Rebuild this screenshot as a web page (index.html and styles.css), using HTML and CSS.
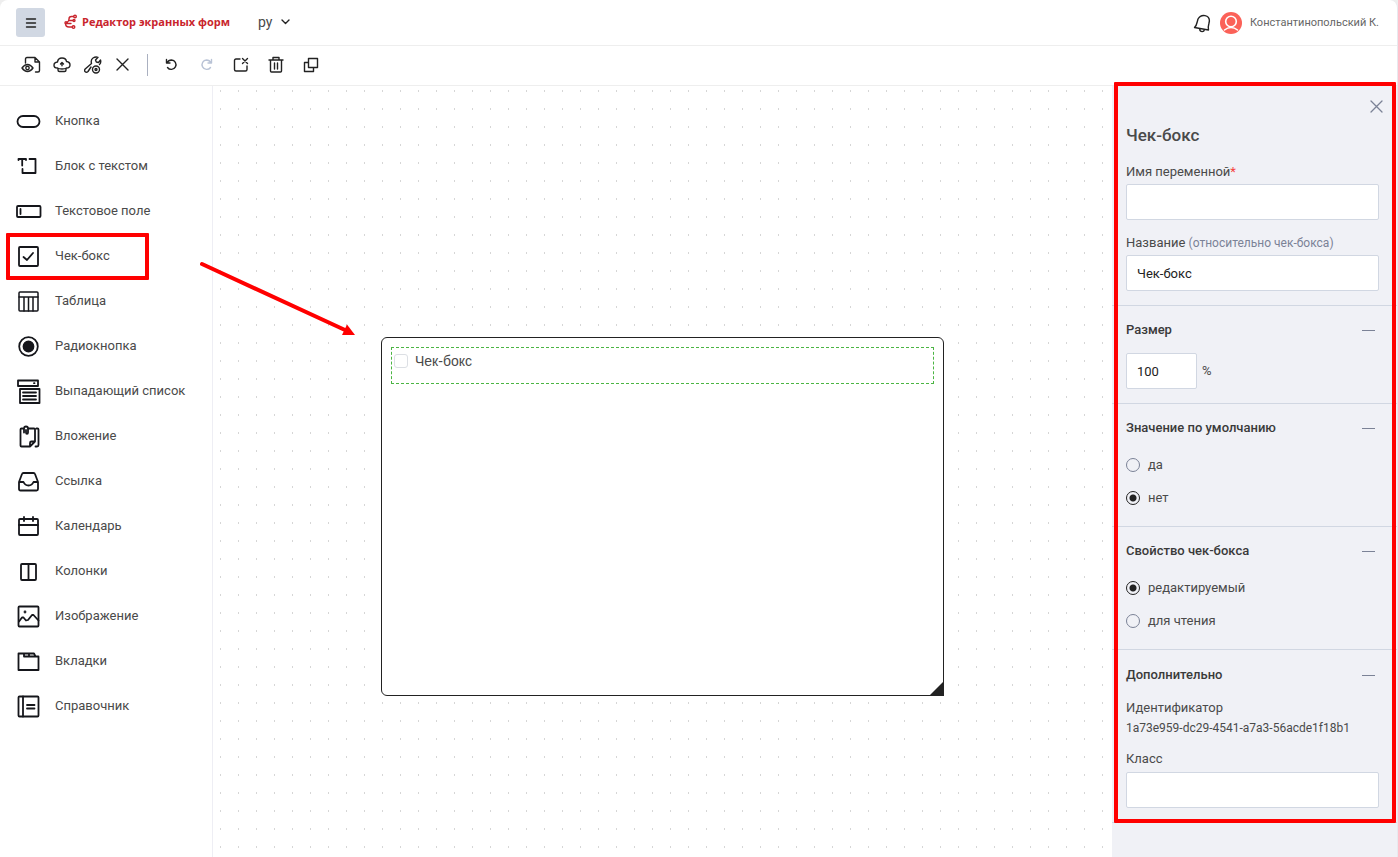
FILE: index.html
```
<!DOCTYPE html>
<html lang="ru">
<head>
    <meta charset="UTF-8">
    <title>Редактор экранных форм</title>
    <link rel="stylesheet" href="styles.css">
</head>
<body>
    <div class="app">
        <header class="header">
            <button class="menu-btn" type="button" aria-label="Меню">
                <svg width="12" height="12" viewBox="0 0 12 12"><path d="M1.500 2h9M1.500 6h9M1.500 10h9"/></svg>
            </button>
            <a class="brand" href="#">
                <svg width="14" height="16" viewBox="0 0 14 16"><path d="M9.500 2.500H7.500Q5 2.500 5 5T3 8.500M1.500 9.500Q1.500 13 5 13h3M5 6.500h3.500M3 9.500h4"/><circle cx="11" cy="2.500" r="1.300"/><circle cx="10" cy="6.500" r="1"/><circle cx="9.500" cy="13" r="1.300"/><circle cx="2" cy="8.800" r="1"/></svg>
                <span>Редактор экранных форм</span>
            </a>
            <button class="lang" type="button">
                <span>ру</span>
                <svg width="9" height="6" viewBox="0 0 9 6"><path d="M1 1l3.500 3.500L8 1"/></svg>
            </button>
            <div class="user">
                <button class="icon-btn" type="button" aria-label="Уведомления">
                    <svg width="20" height="20" viewBox="0 0 20 20"><path d="M2.500 14.500L16.500 17Q15.800 14.500 16.800 11l.6-3Q17.500 3.500 13 2.600T6 6L5.200 9Q4.500 12.500 2.500 14.500zM7.500 15.800q.5 2.700 2.700 2.800 1.800 0 2.300-2"/></svg>
                </button>
                <svg class="avatar" width="22" height="22" viewBox="0 0 22 22"><circle class="avatar-bg" cx="11" cy="11" r="11"/><circle cx="11" cy="9.500" r="5.300"/><path d="M4.500 18q3-2.500 6.500-2.500t6.500 2.500"/></svg>
                <span class="user-name">Константинопольский К.</span>
            </div>
        </header>

        <div class="toolbar">
            <button class="icon-btn" type="button" aria-label="Просмотр">
                <svg width="20" height="18" viewBox="0 0 20 18"><path d="M4.500 7V3q0-1.500 1.500-1.500h8L18.500 6v8.500q0 1.500-1.500 1.500h-2.500M14 1.500V6h4.500M1 12q2.500-3.500 5.500-3.500T12 12q-2.500 3.500-5.500 3.500T1 12z"/><circle cx="6.500" cy="12" r="1.700"/></svg>
            </button>
            <button class="icon-btn" type="button" aria-label="Опубликовать">
                <svg width="18" height="16" viewBox="0 0 18 16"><path d="M4.500 11Q1 11 1 8.200T4.500 5Q5 1 9 1t4.500 3.500Q17 5 17 8t-3.500 3M4.500 11q1.500 1 4.500 1t4.500-1M5 11.500V13q0 1.500 1.500 1.500h5q1.500 0 1.500-1.500v-1.500M9 8.800V5.500M7.500 7L9 5.500 10.500 7"/></svg>
            </button>
            <button class="icon-btn" type="button" aria-label="Настройки">
                <svg width="18" height="18" viewBox="0 0 18 18"><path d="M7 11L4 15.500q-1.500 1.500-2.800.3t0-2.800L7.500 7.500Q6.500 3.500 9 2t5-.7L11.500 4l.8 2 2.200.5L16.500 4q.8 3-1 4.500"/><circle cx="12" cy="13.500" r="3.500"/><circle cx="12" cy="13.500" r="1"/></svg>
            </button>
            <button class="icon-btn" type="button" aria-label="Закрыть">
                <svg width="13" height="13" viewBox="0 0 13 13"><path d="M1 1l11 11M12 1L1 12"/></svg>
            </button>
            <span class="divider"></span>
            <button class="icon-btn" type="button" aria-label="Отменить">
                <svg width="13" height="13" viewBox="0 0 13 13"><path d="M1.500 1.500V5H5M1.800 5Q3.500 2 6.500 2A4.700 4.700 0 1 1 2.500 9.500"/></svg>
            </button>
            <button class="icon-btn disabled" type="button" aria-label="Повторить" disabled>
                <svg width="13" height="13" viewBox="0 0 13 13"><path d="M11.500 1.500V5H8M11.200 5Q9.500 2 6.500 2A4.700 4.700 0 1 0 10.500 9.500"/></svg>
            </button>
            <button class="icon-btn" type="button" aria-label="Очистить">
                <svg width="16" height="16" viewBox="0 0 16 16"><path d="M7 2H3Q1.500 2 1.500 3.500v9Q1.500 14 3 14h9.500q1.500 0 1.500-1.500V9M9.500 1.500l5 5M14.500 1.500l-5 5"/></svg>
            </button>
            <button class="icon-btn" type="button" aria-label="Удалить">
                <svg width="16" height="18" viewBox="0 0 16 18"><path d="M1 4h14M5 4V1.500h6V4M2.500 4v11q0 1 1 1h9q1 0 1-1V4M6.500 7v6M9.500 7v6"/></svg>
            </button>
            <button class="icon-btn" type="button" aria-label="Копировать">
                <svg width="16" height="16" viewBox="0 0 16 16"><path d="M5.500 1.500h9v9h-9zM5.500 5.500h-4v9h9v-4"/></svg>
            </button>
        </div>

        <div class="workspace">
            <nav class="palette">
                <button class="tool" type="button">
                    <svg width="26" height="26" viewBox="0 0 26 26"><rect x="1.500" y="8" width="22" height="11" rx="5.500"/></svg>
                    <span>Кнопка</span>
                </button>
                <button class="tool" type="button">
                    <svg width="26" height="26" viewBox="0 0 26 26"><path d="M2.500 7V6H10v1M6.200 6v6.500M13.500 6h6v14h-13v-4"/></svg>
                    <span>Блок с текстом</span>
                </button>
                <button class="tool" type="button">
                    <svg width="26" height="26" viewBox="0 0 26 26"><rect x="1" y="8" width="23.500" height="11" rx="1"/><path d="M4.500 11v5"/></svg>
                    <span>Текстовое поле</span>
                </button>
                <button class="tool selected" type="button">
                    <svg width="26" height="26" viewBox="0 0 26 26"><rect x="3" y="4" width="19" height="19" rx="1"/><path d="M7.500 14l3.500 3 6-7"/></svg>
                    <span>Чек-бокс</span>
                </button>
                <button class="tool" type="button">
                    <svg class="thin" width="26" height="26" viewBox="0 0 26 26"><rect x="3" y="4" width="19" height="19" rx="1"/><path d="M3 9h19M8 9v14M12.500 9v14M17 9v14"/></svg>
                    <span>Таблица</span>
                </button>
                <button class="tool" type="button">
                    <svg width="26" height="26" viewBox="0 0 26 26"><circle cx="12.500" cy="13.500" r="9.300"/><circle class="solid" cx="12.500" cy="13.500" r="5"/></svg>
                    <span>Радиокнопка</span>
                </button>
                <button class="tool" type="button">
                    <svg width="26" height="26" viewBox="0 0 26 26"><path d="M2 2.500h20v5.500H2zM4 11h19.500v14H4zM7 14.500h13M7 18h13M7 21.500h13M18 5.200h.5"/></svg>
                    <span>Выпадающий список</span>
                </button>
                <button class="tool" type="button">
                    <svg width="26" height="26" viewBox="0 0 26 26"><path d="M6.500 5.500H5.500Q4.500 5.500 4.500 6.500v16q0 1 1 1H14l5-5V6.500q0-1-1-1H13M14 23.500V20q0-1.500 1.500-1.500H19M20.500 5.500h1q1 0 1 1v15.500q0 1.500-1.500 1.500h-1.500M8 9.500V5.500q0-2 2-2t2 2v4q0 1.300-1 1.300T10 9.500V7"/></svg>
                    <span>Вложение</span>
                </button>
                <button class="tool" type="button">
                    <svg width="26" height="26" viewBox="0 0 26 26"><path d="M3 14L6 6q.3-1 1.500-1h10q1.200 0 1.500 1l3 8v7q0 1.500-1.500 1.500h-16Q3 22.500 3 21zM3 14h4.500q1.500 3.500 5 3.500t5-3.500H22"/></svg>
                    <span>Ссылка</span>
                </button>
                <button class="tool" type="button">
                    <svg width="26" height="26" viewBox="0 0 26 26"><rect x="3" y="6" width="19" height="16" rx="1"/><path d="M3 12h19M8 4v4M17 4v4"/></svg>
                    <span>Календарь</span>
                </button>
                <button class="tool" type="button">
                    <svg width="26" height="26" viewBox="0 0 26 26"><rect x="5" y="6" width="15" height="16" rx="1"/><path d="M12.500 6v16"/></svg>
                    <span>Колонки</span>
                </button>
                <button class="tool" type="button">
                    <svg width="26" height="26" viewBox="0 0 26 26"><rect x="2.500" y="3.500" width="20" height="20" rx="1"/><path d="M3 18.500l3-4h1.500l2.500 3 2-.5 4-5h1.500l5 5.500"/><circle class="solid" cx="9" cy="9" r=".5"/></svg>
                    <span>Изображение</span>
                </button>
                <button class="tool" type="button">
                    <svg width="26" height="26" viewBox="0 0 26 26"><path d="M2.500 5.500H18l1.500 3h3V22h-20zM8 5.500v3h12M13 5.500v3"/></svg>
                    <span>Вкладки</span>
                </button>
                <button class="tool" type="button">
                    <svg width="26" height="26" viewBox="0 0 26 26"><rect x="2.500" y="3.500" width="20" height="20" rx="1"/><path d="M7 3.500v20M11 12h7.500M11 15.500h7.500"/></svg>
                    <span>Справочник</span>
                </button>
            </nav>

            <main class="canvas">
                <div class="form-box">
                    <label class="form-field">
                        <input type="checkbox">
                        <span>Чек-бокс</span>
                    </label>
                    <span class="resize"></span>
                </div>
                <svg class="arrow" width="158" height="80" viewBox="0 0 158 80"><path class="arrow-line" d="M4 4L147 70"/><path class="arrow-head" d="M157 75h-13l5-10.500z"/></svg>
            </main>

            <aside class="panel">
                <section class="section section-main">
                    <button class="close" type="button" aria-label="Закрыть панель">
                        <svg width="13" height="13" viewBox="0 0 13 13"><path d="M1 1l11 11M12 1L1 12"/></svg>
                    </button>
                    <h2>Чек-бокс</h2>
                    <label for="var-name">Имя переменной<span class="required">*</span></label>
                    <input id="var-name" class="text-input" type="text">
                    <label for="title">Название <small>(относительно чек-бокса)</small></label>
                    <input id="title" class="text-input" type="text" value="Чек-бокс">
                </section>
                <section class="section">
                    <h3>Размер <button class="fold" type="button" aria-label="Свернуть"></button></h3>
                    <div class="size-row">
                        <input id="size" class="text-input" type="text" value="100">
                        <label for="size">%</label>
                    </div>
                </section>
                <section class="section section-radio">
                    <h3>Значение по умолчанию <button class="fold" type="button" aria-label="Свернуть"></button></h3>
                    <label class="radio"><input type="radio" name="default">да</label>
                    <label class="radio"><input type="radio" name="default" checked>нет</label>
                </section>
                <section class="section section-radio">
                    <h3>Свойство чек-бокса <button class="fold" type="button" aria-label="Свернуть"></button></h3>
                    <label class="radio"><input type="radio" name="access" checked>редактируемый</label>
                    <label class="radio"><input type="radio" name="access">для чтения</label>
                </section>
                <section class="section section-extra">
                    <h3>Дополнительно <button class="fold" type="button" aria-label="Свернуть"></button></h3>
                    <p>Идентификатор</p>
                    <p class="ident">1a73e959-dc29-4541-a7a3-56acde1f18b1</p>
                    <label for="class-name">Класс</label>
                    <input id="class-name" class="text-input" type="text">
                </section>
                <div class="panel-frame"></div>
            </aside>
        </div>
    </div>
</body>
</html>
```
FILE: styles.css
```
* {
    box-sizing: border-box;
    margin: 0;
    padding: 0;
}
body {
    background-color: #eee;
    color: #4a4a4a;
    font: 13px/20px Roboto, "Liberation Sans", sans-serif;
}
button {
    border: 0;
    background: none;
    color: inherit;
    font: inherit;
    cursor: pointer;
}
svg {
    display: block;
    flex: none;
    fill: none;
    stroke: #222;
    stroke-width: 1.4;
    stroke-linecap: round;
    stroke-linejoin: round;
}
.app {
    display: flex;
    flex-direction: column;
    min-height: 100vh;
    border-right: 1px solid #e8e9ee;
    border-radius: 8px 8px 0 0;
    background-color: #fff;
}
.header {
    display: flex;
    align-items: center;
    height: 46px;
    padding: 0 18px 0 16px;
    border-bottom: 1px solid #eee;
}
.menu-btn {
    display: flex;
    align-items: center;
    justify-content: center;
    width: 29px;
    height: 29px;
    border-radius: 3px;
    background-color: #d1d8e3;
}
.brand {
    display: flex;
    align-items: center;
    gap: 4px;
    margin-left: 19px;
    padding-bottom: 2px;
    color: #c9252d;
    font: 700 11px/20px "Open Sans", "Liberation Sans", sans-serif;
    text-decoration: none;
}
.brand svg {
    stroke: #c9252d;
}
.lang {
    display: flex;
    align-items: center;
    gap: 8px;
    margin-left: 28px;
    padding-bottom: 2px;
    font-size: 14px;
}
.user {
    display: flex;
    align-items: center;
    gap: 8px;
    margin-left: auto;
    color: #666;
    font-size: 11px;
}
.icon-btn {
    display: flex;
    align-items: center;
    justify-content: center;
    width: 20px;
    height: 24px;
}
.avatar {
    stroke: #fff;
    stroke-width: 1.6;
}
.avatar-bg {
    fill: #fb6158;
    stroke: none;
}
.toolbar {
    display: flex;
    align-items: center;
    gap: 15px;
    height: 40px;
    padding: 0 21px 2px;
    border-bottom: 1px solid #eee;
}
.toolbar .icon-btn:nth-child(-n+3) {
    margin-right: -4px;
}
.toolbar .icon-btn:nth-child(4) {
    margin-left: -2px;
}
.disabled svg {
    stroke: #b9c3d6;
}
.divider {
    width: 1px;
    height: 22px;
    margin-right: -2px;
    background-color: #aab0c0;
}
.workspace {
    display: flex;
    flex: 1;
}
.palette {
    flex: none;
    width: 213px;
    padding: 12px 0;
    border-right: 1px solid #eeeef4;
}
.tool {
    display: flex;
    align-items: center;
    gap: 13px;
    width: 100%;
    height: 45px;
    padding-left: 16px;
    text-align: left;
}
.tool svg {
    stroke: #15161b;
    stroke-width: 1.8;
}
.tool .thin {
    stroke-width: 1.5;
}
.tool .solid {
    fill: #15161b;
}
.tool.selected {
    position: relative;
}
.tool.selected::after {
    content: "";
    position: absolute;
    top: 0;
    left: 6px;
    box-sizing: border-box;
    width: 143px;
    height: 47px;
    border: 4px solid #f00;
    border-radius: 1px;
}
/* one 1x2 dot in every 18px cell */
.canvas {
    position: relative;
    flex: 1;
    background: conic-gradient(at 1px 2px, transparent 75%, #d6d6d6 0) 7px 4px / 18px 18px;
}
.form-box {
    position: absolute;
    top: 251px;
    left: 168px;
    width: 563px;
    height: 359px;
    padding: 9px;
    border: 1px solid #222;
    border-radius: 6px 6px 0 6px;
    background-color: #fff;
}
.form-field {
    display: flex;
    align-items: flex-start;
    gap: 7px;
    height: 37px;
    padding: 3px 2px;
    border: 1px dashed #4bb543;
    font: 14px/20px "Liberation Sans", Arial, sans-serif;
}
.form-field input {
    width: 14px;
    height: 14px;
    margin-top: 3px;
    border: 1px solid #dcdfe4;
    border-radius: 3px;
    appearance: none;
}
.resize {
    position: absolute;
    right: -1px;
    bottom: -1px;
    width: 15px;
    height: 15px;
    background-color: #222;
    clip-path: polygon(100% 0, 100% 100%, 0 100%);
}
.arrow {
    position: absolute;
    top: 174px;
    left: -15px;
}
.arrow-line {
    stroke: #f00;
    stroke-width: 4;
}
.arrow-head {
    fill: #f00;
    stroke: none;
}
.panel {
    position: relative;
    flex: none;
    width: 285px;
    background-color: #f0f1f6;
}
.panel-frame {
    position: absolute;
    top: -4px;
    left: 2px;
    width: 282px;
    height: 741px;
    border: 4px solid #f00;
    border-radius: 1px;
    pointer-events: none;
}
.section {
    display: flex;
    flex-direction: column;
    padding: 14px 18px 14px 14px;
    border-bottom: 1px solid #d1d7e2;
}
.close {
    align-self: flex-end;
    margin-right: -4px;
}
.close svg {
    stroke: #7b8296;
    stroke-width: 1.3;
}
.panel h2 {
    margin: 12px 0 17px;
    font-size: 17px;
    font-weight: 500;
    line-height: 20px;
}
.section-main label {
    margin-bottom: 2px;
}
.required {
    color: #f5403c;
}
.section small {
    color: #7b8296;
    font-size: 12px;
    line-height: 16px;
}
.text-input {
    width: 100%;
    height: 36px;
    padding: 0 10px;
    border: 1px solid #d1d7e2;
    border-radius: 2px;
    background-color: #fff;
    color: #222;
    font: inherit;
}
.section-main .text-input + label {
    margin-top: 13px;
}
.panel h3 {
    display: flex;
    align-items: center;
    justify-content: space-between;
    color: #3a3a3a;
    font-size: 13px;
    font-weight: 500;
    line-height: 20px;
}
.fold {
    width: 13px;
    height: 20px;
    margin-right: 4px;
    background: linear-gradient(#7b8296, #7b8296) center / 13px 1px no-repeat;
}
.size-row {
    display: flex;
    align-items: center;
    gap: 5px;
    margin-top: 13px;
}
.size-row .text-input {
    width: 71px;
}
.section-radio {
    padding-bottom: 18px;
}
.radio {
    display: flex;
    align-items: center;
    gap: 8px;
    height: 20px;
    margin-top: 13px;
}
.section-radio h3 {
    margin-bottom: 4px;
}
.radio input {
    width: 14px;
    height: 14px;
    border: 1px solid #7b8296;
    border-radius: 50%;
    appearance: none;
}
.radio input:checked {
    border-color: #222;
    background: radial-gradient(circle, #222 3px, transparent 4px);
}
.section-extra {
    padding-top: 15px;
}
.section-extra h3 {
    margin-bottom: 13px;
}
.section-extra label {
    margin: 11px 0 3px;
}
.ident {
    font-size: 12px;
}
```
